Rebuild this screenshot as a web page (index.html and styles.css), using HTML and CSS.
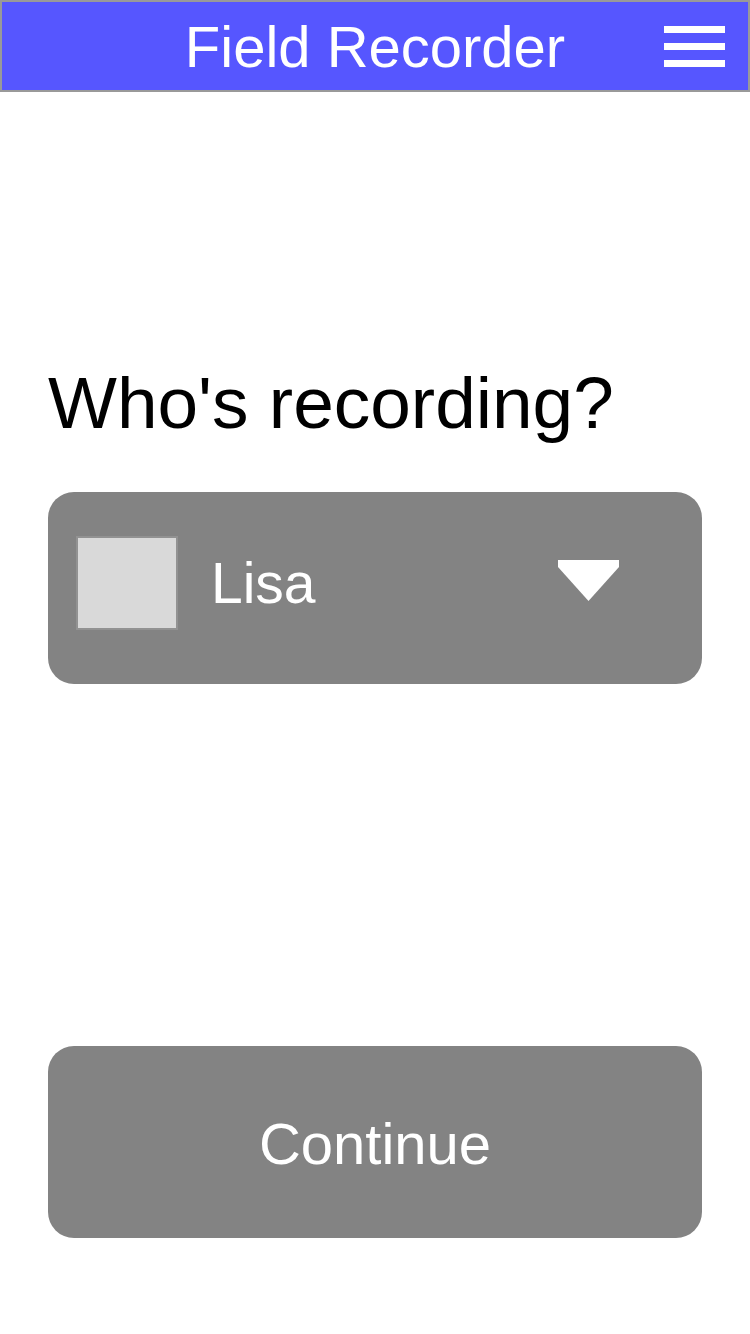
FILE: index.html
```html
<!DOCTYPE html>
<html lang="en">
<head>
<meta charset="utf-8">
<title>Field Recorder</title>
<link rel="stylesheet" href="styles.css">
</head>
<body>
<header class="topbar">
  <div class="topbar-spacer"></div>
  <h1 class="topbar-title">Field Recorder</h1>
  <div class="topbar-menu">
    <span class="menu-bar"></span>
    <span class="menu-bar"></span>
    <span class="menu-bar"></span>
  </div>
</header>
<main class="content">
  <h2 class="question">Who's recording?</h2>
  <div class="picker">
    <div class="avatar"></div>
    <span class="picker-name">Lisa</span>
    <svg class="picker-arrow" width="61" height="41" viewBox="0 0 61 41"><polygon points="0,0 61,0 61,7 30.5,41 0,7" fill="#ffffff"/></svg>
  </div>
  <button class="continue">Continue</button>
</main>
</body>
</html>
```

FILE: styles.css
```css
html, body {
  margin: 0;
  padding: 0;
  background: #ffffff;
}
body {
  width: 750px;
  font-family: "Liberation Sans", Arial, Helvetica, sans-serif;
}
.topbar {
  box-sizing: border-box;
  height: 92px;
  background: #5656ff;
  border: 2px solid #999999;
  display: grid;
  grid-template-columns: 1fr auto 1fr;
  align-items: center;
}
.topbar-title {
  margin: 0;
  color: #ffffff;
  font-weight: normal;
  font-size: 58px;
  line-height: 58px;
  padding-top: 2px;
}
.topbar-menu {
  justify-self: end;
  padding-right: 23px;
  display: flex;
  flex-direction: column;
  gap: 10px;
  padding-top: 1px;
}
.menu-bar {
  display: block;
  width: 61px;
  height: 7px;
  background: #ffffff;
}
.content {
  padding: 0 48px;
  display: flex;
  flex-direction: column;
}
.question {
  margin: 275px 0 0 0;
  font-weight: normal;
  font-size: 73px;
  line-height: 72px;
  color: #000000;
}
.picker {
  margin-top: 53px;
  box-sizing: border-box;
  height: 192px;
  background: #838383;
  border-radius: 26px;
  display: flex;
  align-items: center;
  padding: 0 83px 10px 28px;
}
.avatar {
  box-sizing: border-box;
  width: 102px;
  height: 94px;
  background: #d9d9d9;
  border: 2px solid #929292;
}
.picker-name {
  margin-left: 33px;
  flex: 1;
  color: #ffffff;
  font-size: 57px;
  line-height: 56px;
}
.picker-arrow {
  display: block;
  margin-bottom: 6px;
}
.continue {
  margin-top: 362px;
  height: 192px;
  border: none;
  border-radius: 26px;
  background: #838383;
  color: #ffffff;
  font-family: "Liberation Sans", Arial, Helvetica, sans-serif;
  font-size: 58px;
  line-height: 56px;
  padding: 4px 0 0 0;
}
```
